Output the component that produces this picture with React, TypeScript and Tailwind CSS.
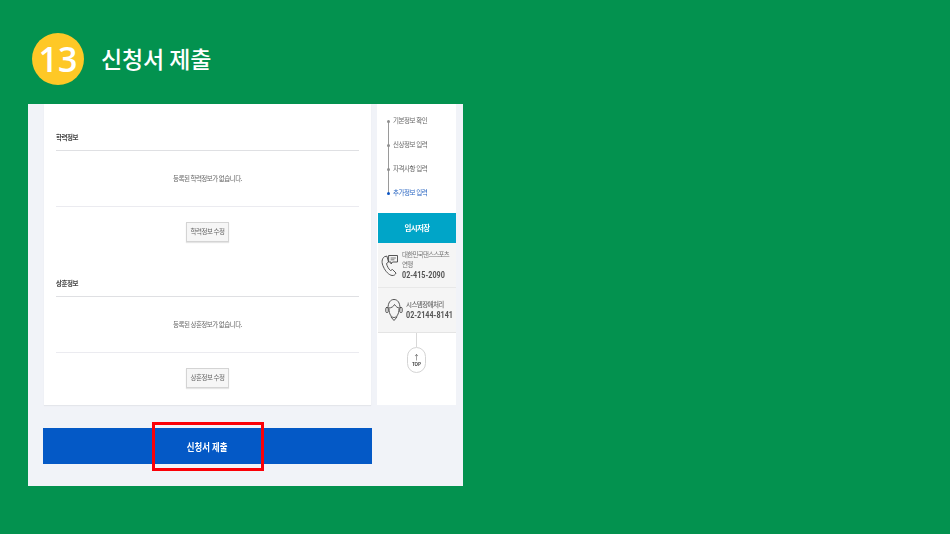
const ko = { fontFamily: '"Noto Sans CJK KR", "Noto Sans", sans-serif' };

function Section({ title, empty, button, last }: { title: string; empty: string; button: string; last?: boolean }) {
  return (
    <section className={last ? "" : "h-[146px]"}>
      <div className="h-[19px] border-b border-[#dfe0e3] text-[6.5px] leading-[11px] font-bold text-[#444] tracking-[-0.45px]">{title}</div>
      <div className="h-[56px] border-b border-[#ebebf0] flex items-center justify-center text-[6.5px] text-[#666] tracking-[-0.5px]">{empty}</div>
      <div className="flex justify-center pt-[15px]">
        <div className="w-[43px] h-[20px] border border-[#d4d4d4] bg-[#f6f6f6] shadow-[0_1px_1px_rgba(0,0,0,0.1)] flex items-center justify-center text-[6.5px] text-[#666] tracking-[-0.5px]">{button}</div>
      </div>
    </section>
  );
}

function Step({ label, active }: { label: string; active?: boolean }) {
  return (
    <div className={`relative h-[24px] flex items-center gap-[3px] text-[6.5px] tracking-[-0.45px] ${active ? "text-[#2a66c2]" : "text-[#666]"}`}>
      <span className={`z-10 w-[3px] h-[3px] rounded-full ${active ? "bg-[#0b55c5]" : "bg-[#8f8f8f]"}`} />
      <span>{label}</span>
    </div>
  );
}

function PhoneIcon() {
  return (
    <svg className="shrink-0" width="18" height="23" viewBox="0 0 18 23" fill="none" stroke="#444" strokeWidth="0.9" strokeLinejoin="round" strokeLinecap="round">
      <path d="M3 3 C0.5 5 0.5 9 2.5 13 C4.5 17.5 8 21 11 21.5 C13 21.8 14.5 20.5 15 19 L11.5 15.5 L9.5 16.5 C7.5 15 6 12 5.5 9.5 L7.5 8 L6 2.5 Z" />
      <path d="M8 1.5 H16.5 V8 H11.5 L10 10 V8 H8 Z" />
      <path d="M10 4 H14.5 M10 5.8 H13" strokeWidth="0.7" />
    </svg>
  );
}

function AgentIcon() {
  return (
    <svg className="shrink-0" width="18" height="24" viewBox="0 0 18 24" fill="none" stroke="#444" strokeWidth="0.9" strokeLinecap="round" strokeLinejoin="round">
      <path d="M3 10 C3 4.5 5.5 1.5 9 1.5 C12.5 1.5 15 4.5 15 10" />
      <path d="M4 10 C6.5 10 8.5 8.5 9.5 6.5 C11 8.5 12.5 10 14 10" />
      <path d="M4 11 C4 16.5 6.5 19.5 9 19.5 C11.5 19.5 14 16.5 14 11" />
      <path d="M6 19 L9 22.5 L12 19" />
      <rect x="0.8" y="9.5" width="2.4" height="5" rx="1" />
      <rect x="14.8" y="9.5" width="2.4" height="5" rx="1" />
    </svg>
  );
}

export default function App() {
  return (
    <div className="w-[950px] h-[534px] bg-[#03924f] overflow-hidden" style={ko}>
      <header className="flex items-center h-[52px] mt-[33px] ml-[32px] gap-[17px]">
        <div className="w-[52px] h-[52px] rounded-full bg-[#fec826] flex items-center justify-center text-white text-[34px] leading-none font-semibold font-['Open_Sans',sans-serif]">13</div>
        <h1 className="text-[23px] leading-none font-medium text-white -mt-[1px] tracking-[-0.1px]">신청서 제출</h1>
      </header>

      <main className="relative ml-[28px] mt-[19px] w-[435px] h-[382px] bg-[#f1f3f8] pl-[16px] [filter:blur(0.3px)]">
        <div className="flex gap-[6px] h-[301px]">
          <div className="w-[327px] bg-white px-[12px] pt-[28px] shadow-[0_1px_1px_rgba(0,0,0,0.05)]">
            <Section title="학력정보" empty="등록된 학력정보가 없습니다." button="학력정보 수정" />
            <Section title="상훈정보" empty="등록된 상훈정보가 없습니다." button="상훈정보 수정" last />
          </div>

          <aside className="w-[79px] bg-white flex flex-col items-stretch">
            <div className="relative h-[109px] pl-[10px] pt-[5px]">
              <div className="absolute left-[11px] top-[17px] w-px h-[72px] bg-[#9a9a9a]" />
              <Step label="기본정보 확인" />
              <Step label="신상정보 입력" />
              <Step label="자격사항 입력" />
              <Step label="추가정보 입력" active />
            </div>
            <div className="ml-px h-[30px] bg-[#00a5c8] flex items-center justify-center text-white font-bold text-[7.5px] tracking-[-0.6px]">임시저장</div>
            <div className="ml-px h-[45px] bg-[#f5f5f5] border-b border-[#e8e8e8] flex items-center pl-[3px] gap-[3px]">
              <PhoneIcon />
              <div className="w-[48px]">
                <div className="text-[6.5px] leading-[10px] text-[#777] tracking-[-0.75px]">대한민국댄스스포츠 연맹</div>
                <div className="text-[9px] leading-[13px] font-bold text-[#555] whitespace-nowrap origin-left scale-x-[0.8] font-['Roboto',sans-serif]">02-415-2090</div>
              </div>
            </div>
            <div className="ml-px h-[45px] bg-[#f5f5f5] border-b border-[#e4e4e4] flex items-center pl-[7px] gap-[3px]">
              <AgentIcon />
              <div className="w-[44px]">
                <div className="text-[6.5px] leading-[10px] font-medium text-[#666] tracking-[-0.6px]">시스템장애처리</div>
                <div className="text-[9px] leading-[13px] font-bold text-[#555] whitespace-nowrap origin-left scale-x-[0.8] font-['Roboto',sans-serif]">02-2144-8141</div>
              </div>
            </div>
            <div className="flex flex-col items-center">
              <div className="w-px h-[14px] bg-[#d8d8d8]" />
              <div className="w-[19px] h-[26px] rounded-full border border-[#d4d4d4] bg-white flex flex-col items-center justify-center gap-[2px] text-[#444]">
                <span className="text-[7px] h-[6px] leading-[6px]">↑</span>
                <span className="text-[4.5px] h-[5px] leading-[5px] font-bold">TOP</span>
              </div>
            </div>
          </aside>
        </div>

        <div className="mt-[23px] w-[329px] -ml-px h-[36px] bg-[#0459c6] flex items-center justify-center text-white font-bold text-[10px]">
          <span className="inline-block scale-x-[0.84]">신청서 제출</span>
        </div>
        <div className="absolute left-[124px] top-[318px] w-[112px] h-[49px] border-[3px] border-[#fb0007]" />
      </main>
    </div>
  );
}
